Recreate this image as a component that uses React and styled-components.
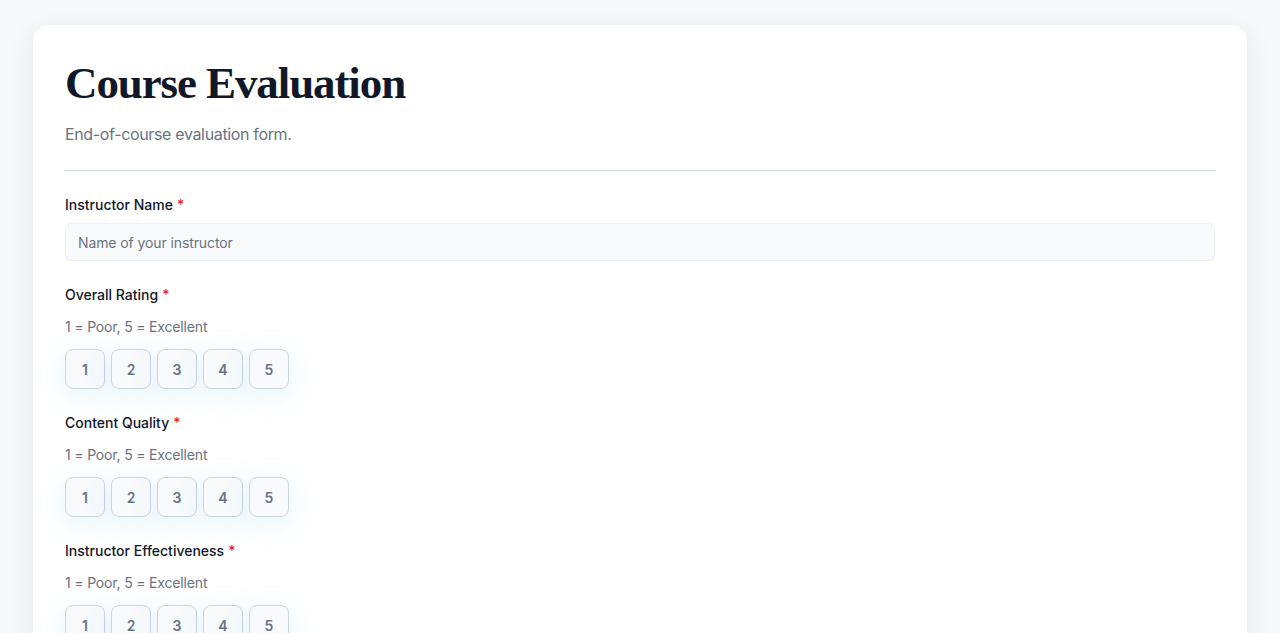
import React from "react";
import styled, { createGlobalStyle } from "styled-components";

const Global = createGlobalStyle`
  html, body { margin: 0; padding: 0; }
  body { background: #f7f8fa; font-family: Inter, "Noto Sans", sans-serif; }
  * { box-sizing: border-box; }
`;

const Page = styled.div`
  padding: 25px 33px 40px;
`;

const Card = styled.main`
  background: #ffffff;
  border-radius: 16px;
  box-shadow: 0 6px 28px rgba(15, 23, 42, 0.07);
  padding: 32px 32px 40px;
`;

const Title = styled.h1`
  margin: 0;
  font-family: "Liberation Serif", "Times New Roman", serif;
  font-weight: 700;
  font-size: 45px;
  line-height: 53px;
  letter-spacing: -1.1px;
  color: #111827;
`;

const Subtitle = styled.p`
  margin: 12px 0 0;
  font-size: 16px;
  line-height: 24px;
  letter-spacing: -0.35px;
  color: #6b7280;
`;

const Divider = styled.hr`
  border: 0;
  border-top: 1px solid #cbd8e1;
  margin: 24px 0 24px;
`;

const Field = styled.div`
  display: flex;
  flex-direction: column;
  margin-bottom: 24px;
`;

const Label = styled.label`
  font-size: 14px;
  line-height: 20px;
  font-weight: 500;
  color: #111827;
`;

const Req = styled.span`
  color: #dc2626;
  margin-left: 4px;
`;

const Input = styled.input`
  margin-top: 8px;
  height: 38px;
  border: 1px solid #eceff3;
  background: #f8fafc;
  border-radius: 6px;
  padding: 0 12px;
  font-family: inherit;
  font-size: 14px;
  letter-spacing: -0.1px;
  color: #111827;
  &::placeholder { color: #6b7280; }
`;

const Hint = styled.p`
  margin: 12px 0 0;
  font-size: 14px;
  line-height: 20px;
  letter-spacing: -0.17px;
  color: #6b7280;
`;

const Scale = styled.div`
  display: flex;
  gap: 6px;
  margin-top: 12px;
`;

const RateButton = styled.button`
  width: 40px;
  height: 40px;
  border: 1px solid #cbd5e1;
  border-radius: 8px;
  background: #f8fafc;
  font-family: inherit;
  font-size: 14px;
  font-weight: 600;
  color: #64748b;
  box-shadow: 0 6px 30px rgba(56, 168, 240, 0.13);
  cursor: pointer;
`;

const ratings = ["Overall Rating", "Content Quality", "Instructor Effectiveness"];

export default function App() {
  return (
    <>
      <Global />
      <Page>
        <Card>
          <Title>Course Evaluation</Title>
          <Subtitle>End-of-course evaluation form.</Subtitle>
          <Divider />
          <Field>
            <Label>
              Instructor Name<Req>*</Req>
            </Label>
            <Input placeholder="Name of your instructor" />
          </Field>
          {ratings.map((r) => (
            <Field key={r}>
              <Label>
                {r}
                <Req>*</Req>
              </Label>
              <Hint>1 = Poor, 5 = Excellent</Hint>
              <Scale>
                {[1, 2, 3, 4, 5].map((n) => (
                  <RateButton key={n} type="button">{n}</RateButton>
                ))}
              </Scale>
            </Field>
          ))}
        </Card>
      </Page>
    </>
  );
}
